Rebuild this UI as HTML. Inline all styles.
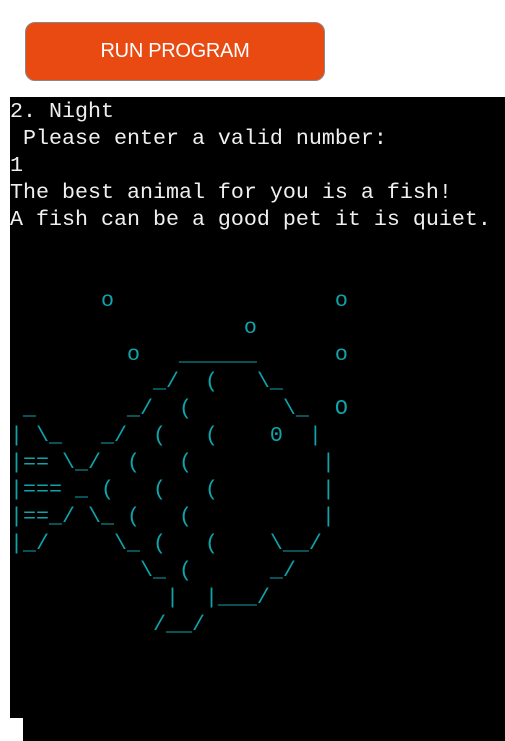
<!DOCTYPE html>
<html><head><meta charset="utf-8"><style>
html,body{margin:0;padding:0;background:#fff;width:505px;height:741px;overflow:hidden;position:relative}
.btn{position:absolute;left:25px;top:22px;width:298px;height:57px;background:#e84a12;border:1px solid #888;border-radius:10px;color:#fff;font:20px "Liberation Sans",Arial,sans-serif;text-align:center;line-height:57px;letter-spacing:-0.3px}
.term{position:absolute;left:10px;top:97px;width:495px;height:644px;background:#000}
.corner{position:absolute;left:10px;top:718px;width:13px;height:23px;background:#fff}
pre{margin:0;position:absolute;left:10px;top:98px;font-family:"Liberation Mono",monospace;font-size:21.67px;line-height:27px;color:#f0f0f0;white-space:pre}
.a{color:#0fa3aa}
</style></head><body>
<div class="btn">RUN PROGRAM</div>
<div class="term"></div>
<div class="corner"></div>
<pre>2. Night
 Please enter a valid number:
1
The best animal for you is a fish!
A fish can be a good pet it is quiet.


<span class="a">       o                 o
                  o
         o   ______      o
           _/  (   \_
 _       _/  (       \_  O
| \_   _/  (   (    0  |
|== \_/  (   (          |
|=== _ (   (   (        |
|==_/ \_ (   (          |
|_/     \_ (   (    \__/
          \_ (      _/
            |  |___/
           /__/</span></pre>
</body></html>
